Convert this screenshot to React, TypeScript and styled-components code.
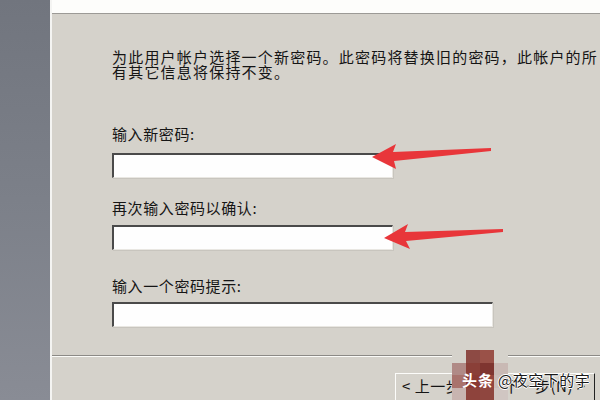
import React from "react";
import styled, { createGlobalStyle } from "styled-components";

const Global = createGlobalStyle`
  html, body { margin: 0; padding: 0; }
  body { width: 600px; height: 400px; overflow: hidden; background: #d5d2cb; }
  #root { width: 600px; height: 400px; }
`;

const Screen = styled.div`
  position: relative;
  width: 600px;
  height: 400px;
  display: flex;
  overflow: hidden;
  font-family: "Noto Sans CJK SC", "Noto Sans", sans-serif;
  color: #151515;
`;

const SideStrip = styled.div`
  width: 50px;
  flex: none;
  background: linear-gradient(180deg, #71757e 0%, #7c8089 50%, #898c95 100%);
  border-right: 2px solid #f4f4f2;
`;

const Dialog = styled.div`
  flex: 1;
  display: flex;
  flex-direction: column;
  background: #d5d2cb;
`;

const Header = styled.div`
  height: 13px;
  flex: none;
  background: #fdfdfb;
  border-bottom: 1px solid #9c9a96;
`;

const Body = styled.div`
  flex: 1;
  display: flex;
  flex-direction: column;
  padding: 35px 0 0 60px;
`;

const Intro = styled.p`
  margin: 0;
  font-size: 15px;
  line-height: 15px;
  letter-spacing: 1.2px;
  white-space: nowrap;
`;

const Field = styled.div<{ $mt: number; $gap: number }>`
  display: flex;
  flex-direction: column;
  margin-top: ${(p) => p.$mt}px;
  gap: ${(p) => p.$gap}px;
`;

const Label = styled.div`
  font-size: 15px;
  line-height: 16px;
  letter-spacing: 0.6px;
  white-space: nowrap;
`;

const TextBox = styled.div<{ $w: number }>`
  width: ${(p) => p.$w}px;
  height: 25px;
  box-sizing: border-box;
  background: #fefefe;
  border-top: 2px solid #4a4a4a;
  border-left: 2px solid #4a4a4a;
  border-right: 1px solid #e9e7e2;
  border-bottom: 1px solid #e9e7e2;
  box-shadow: 1px 1px 0 #c8c5be;
`;

const Footer = styled.div`
  height: 45px;
  box-sizing: border-box;
  flex: none;
  border-top: 1px solid #8c8a86;
  box-shadow: inset 0 1px 0 #fbfbf8;
  display: flex;
  align-items: flex-start;
  padding: 17px 0 0 343px;
  gap: 7px;
`;

const Button = styled.div<{ $w: number }>`
  width: ${(p) => p.$w}px;
  height: 32px;
  box-sizing: border-box;
  flex: none;
  background: #d5d2cb;
  border-top: 1px solid #fcfcfa;
  border-left: 1px solid #fcfcfa;
  border-right: 1px solid #222;
  border-bottom: 1px solid #222;
  font-size: 15px;
  line-height: 24px;
  padding-left: 6px;
  white-space: nowrap;
  letter-spacing: 0.5px;
`;

const Overlay = styled.svg`
  position: absolute;
  left: 0;
  top: 0;
  width: 600px;
  height: 400px;
  pointer-events: none;
`;

const Mosaic = styled.div`
  position: absolute;
  left: 452px;
  top: 350px;
  width: 56px;
  height: 50px;
  display: grid;
  grid-template-columns: repeat(4, 1fr);
  grid-template-rows: repeat(4, 1fr);
`;

const Tile = styled.div<{ $c: string }>`
  background: ${(p) => p.$c};
`;

const Watermark = styled.div`
  position: absolute;
  left: 462px;
  top: 370px;
  display: flex;
  align-items: center;
  gap: 4px;
  font-size: 15px;
  line-height: 20px;
  white-space: nowrap;
`;

const WmBrand = styled.span`
  color: #fff;
  font-weight: 700;
  letter-spacing: 1px;
`;

const WmName = styled.span`
  color: #1a1a1a;
  letter-spacing: 0.5px;
  text-shadow: 1px 0 0 #fff, -1px 0 0 #fff, 0 1px 0 #fff, 0 -1px 0 #fff;
`;

const tiles = [
  "#d5d2cb", "#8d4a44", "#9a5148", "#d5d2cb",
  "#b08a86", "#8a3f38", "#7f3530", "#c9b9b4",
  "#a9736d", "#8a3a33", "#94443c", "#cbbdb8",
  "#c8b4b0", "#8e433c", "#8f463f", "#d0c6c2",
];

export default function App() {
  return (
    <>
      <Global />
      <Screen>
        <SideStrip />
        <Dialog>
          <Header />
          <Body>
            <Intro>
              为此用户帐户选择一个新密码。此密码将替换旧的密码，此帐户的所
              <br />
              有其它信息将保持不变。
            </Intro>
            <Field $mt={47} $gap={11}>
              <Label>输入新密码:</Label>
              <TextBox $w={281} />
            </Field>
            <Field $mt={22} $gap={9}>
              <Label>再次输入密码以确认:</Label>
              <TextBox $w={281} />
            </Field>
            <Field $mt={28} $gap={8}>
              <Label>输入一个密码提示:</Label>
              <TextBox $w={381} />
            </Field>
          </Body>
          <Footer>
            <Button $w={95}>&lt; 上一步(B)</Button>
            <Button $w={98}>下一步(N) &gt;</Button>
          </Footer>
        </Dialog>
        <Overlay viewBox="0 0 600 400">
          <polygon
            points="372,157 396,144 393,152 491,148 491,151 394,161 396,169"
            fill="#e8363a"
          />
          <polygon
            points="384,238 408,224 405,232 503,229 503,232 406,241 410,249"
            fill="#e8363a"
          />
        </Overlay>
        <Mosaic>
          {tiles.map((c, i) => (
            <Tile key={i} $c={c} />
          ))}
        </Mosaic>
        <Watermark>
          <WmBrand>头条</WmBrand>
          <WmName>@夜空下的宇</WmName>
        </Watermark>
      </Screen>
    </>
  );
}
